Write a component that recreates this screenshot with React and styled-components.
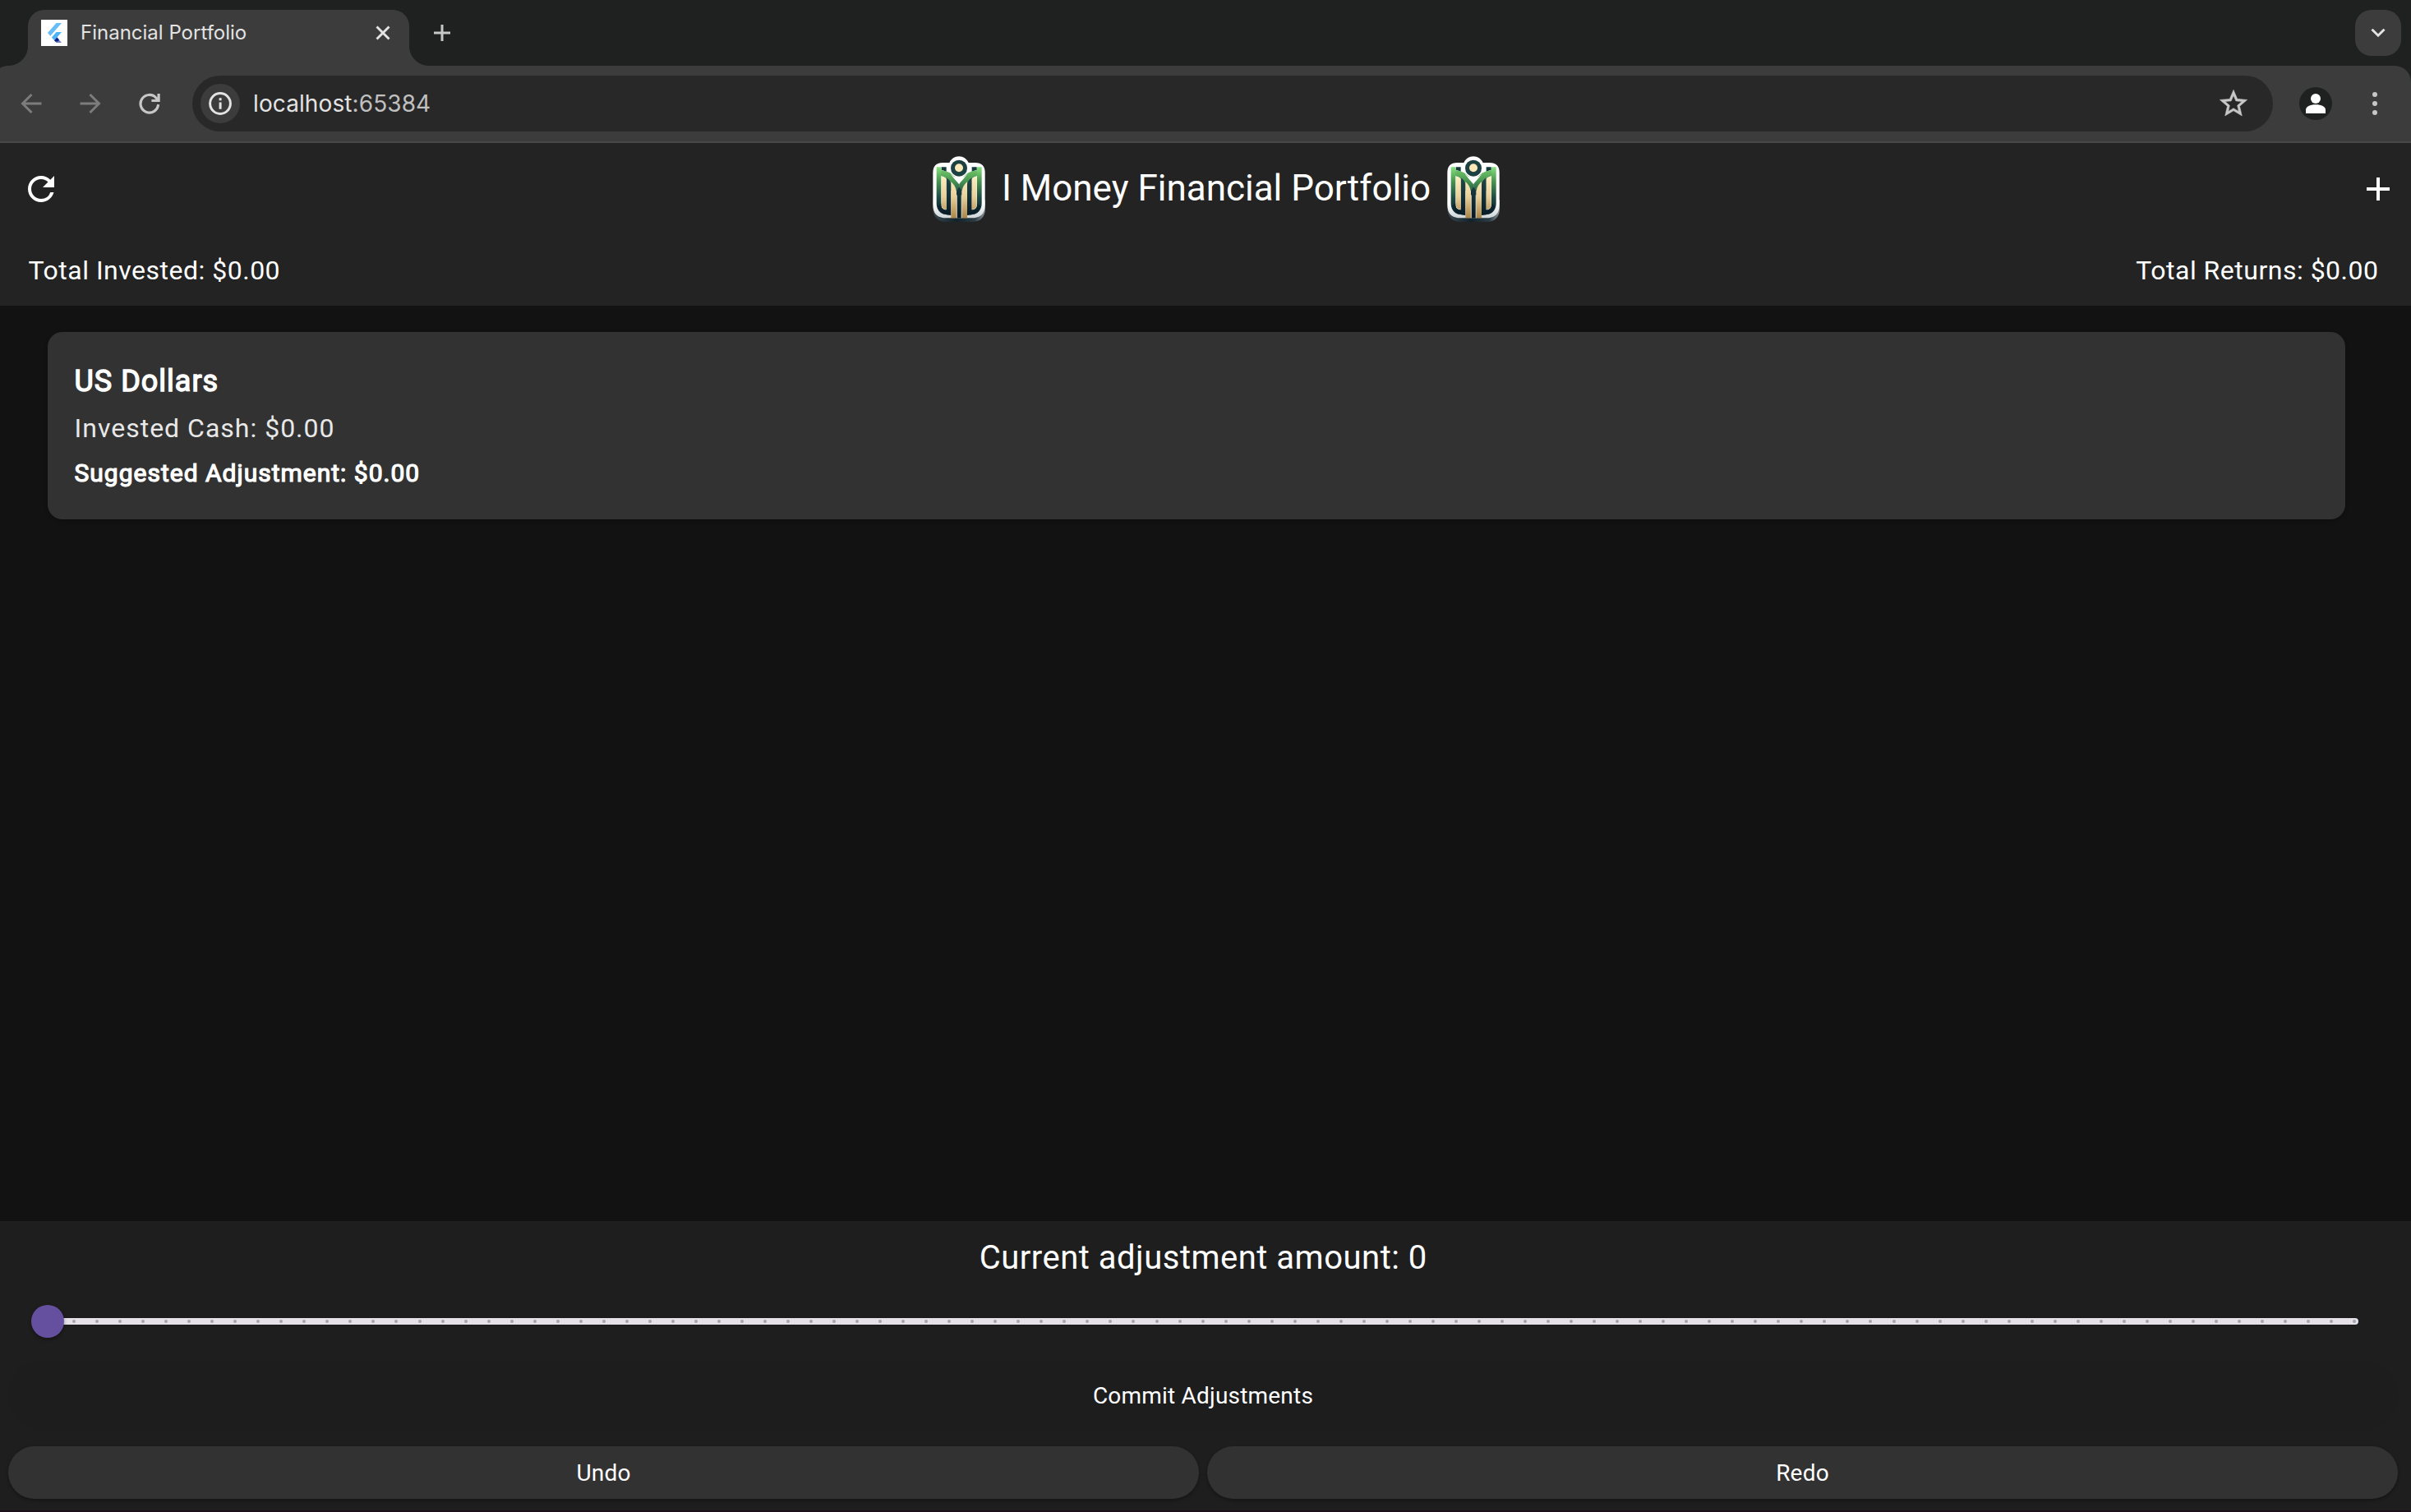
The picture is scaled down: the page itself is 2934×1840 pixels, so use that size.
import React from 'react';
import styled, { createGlobalStyle } from 'styled-components';

const GlobalStyle = createGlobalStyle`
  *, *::before, *::after { box-sizing: border-box; }
  body {
    margin: 0;
    background: #121212;
    color: #fff;
    font-family: Roboto, "Liberation Sans", sans-serif;
  }
  button { border: 0; padding: 0; background: none; color: inherit; font: inherit; }
  svg { display: block; flex: none; }
`;

const Window = styled.div`
  display: flex;
  flex-direction: column;
  width: 100vw;
  height: 100vh;
  overflow: hidden;
`;

/* ---------- browser chrome ---------- */

const BrowserFrame = styled.header`
  flex: none;
  background: #1f2120;
  font-family: Inter, "Liberation Sans", sans-serif;
`;

const TabStrip = styled.div`
  display: flex;
  align-items: center;
  height: 80px;
  padding: 12px 12px 0 34px;
`;

const Tab = styled.div`
  position: relative;
  display: flex;
  align-items: flex-start;
  width: 464px;
  height: 68px;
  padding: 12px 23px 0 16px;
  border-radius: 20px 20px 0 0;
  background: #3c3c3c;

  &::before,
  &::after {
    content: '';
    position: absolute;
    bottom: 0;
    width: 24px;
    height: 24px;
  }
  &::before {
    right: 100%;
    background: radial-gradient(circle at 0 0, transparent 23.5px, #3c3c3c 24.5px);
  }
  &::after {
    left: 100%;
    background: radial-gradient(circle at 100% 0, transparent 23.5px, #3c3c3c 24.5px);
  }
`;

const Favicon = styled.span`
  display: grid;
  place-items: center;
  width: 32px;
  height: 32px;
  background: #fff;
`;

const TabTitle = styled.span`
  flex: 1;
  margin-left: 16px;
  color: #e3e3e3;
  font-size: 24px;
  line-height: 31px;
`;

const TabClose = styled.button`
  display: grid;
  place-items: center;
  height: 32px;
`;

const NewTabButton = styled.button`
  display: grid;
  place-items: center;
  width: 56px;
  height: 56px;
  margin: 0 auto 12px 12px;
`;

const TabSearchButton = styled.button`
  display: grid;
  place-items: center;
  width: 56px;
  height: 56px;
  margin-bottom: 12px;
  border-radius: 20px;
  background: #3c3c3c;
`;

const Toolbar = styled.div`
  display: flex;
  align-items: center;
  height: 94px;
  margin-left: -10px;
  padding: 0 24px 0 20px;
  border-bottom: 2px solid #484848;
  border-radius: 20px 20px 0 0;
  background: #3c3c3c;
`;

const NavButtons = styled.nav`
  display: flex;
  gap: 16px;
`;

const ToolButton = styled.button`
  display: grid;
  place-items: center;
  width: ${(p) => p.$size || 56}px;
  height: 56px;
`;

const Omnibox = styled.div`
  flex: 1;
  display: flex;
  align-items: center;
  height: 68px;
  margin: 0 32px 0 24px;
  padding: 0 28px 0 10px;
  border-radius: 34px;
  background: #282828;
`;

const SiteInfo = styled.span`
  display: grid;
  place-items: center;
  width: 48px;
  height: 48px;
  border-radius: 50%;
  background: #3c3c3c;
`;

const Address = styled.span`
  flex: 1;
  margin-left: 16px;
  color: #e3e3e3;
  font-size: 28px;
  line-height: 68px;
  letter-spacing: 0.1px;
`;

const Port = styled.span`
  color: #c0c0c0;
`;

const Avatar = styled.span`
  display: grid;
  place-items: center;
  width: 40px;
  height: 40px;
  margin-right: 32px;
  border-radius: 50%;
  background: #1f2120;
`;

/* ---------- application ---------- */

const AppHeader = styled.section`
  flex: none;
  background: #232323;
`;

const AppBar = styled.div`
  display: flex;
  align-items: center;
  justify-content: space-between;
  height: 112px;
  padding: 0 16px 0 26px;
`;

const IconButton = styled.button`
  width: 48px;
  height: 48px;
`;

const Brand = styled.div`
  display: flex;
  align-items: center;
  gap: 12px;
  margin-left: 16px;
`;

const AppTitle = styled.h1`
  margin: 0;
  padding-bottom: 3px;
  font-size: 44px;
  font-weight: 400;
  line-height: 56px;
`;

const Totals = styled.div`
  display: flex;
  align-items: center;
  justify-content: space-between;
  height: 86px;
  padding: 0 39.5px 0 34.5px;
  font-size: 32px;
  letter-spacing: 0.5px;
`;

const Holdings = styled.main`
  flex: 1;
  padding: 32px 80px 0 58px;
  background: #121212;
`;

const Card = styled.article`
  height: 228px;
  padding: 33px 32px 0 32.5px;
  border-radius: 18px;
  background: #323232;
  box-shadow: 0 2px 4px rgba(0, 0, 0, 0.25);
  letter-spacing: 1px;
`;

const CardTitle = styled.h2`
  margin: 0;
  font-size: 36px;
  font-weight: 400;
  line-height: 54px;
  -webkit-text-stroke: 1.4px currentColor;
`;

const CardLine = styled.p`
  margin: 0;
  color: #e8e8e8;
  font-size: 32px;
  line-height: 60px;
`;

const CardAdvice = styled.p`
  margin: 0;
  font-size: 30px;
  line-height: 50px;
  -webkit-text-stroke: 1.2px currentColor;
`;

const ControlPanel = styled.footer`
  flex: none;
  display: flex;
  flex-direction: column;
  height: 354px;
  padding: 0 16px 0 10px;
  border-bottom: 2px solid #1a101a;
  background: #1e1e1e;
`;

const AdjustmentLabel = styled.div`
  height: 88px;
  padding-left: 0.5px;
  font-size: 40px;
  line-height: 90px;
  letter-spacing: 0.5px;
  text-align: center;
`;

const Slider = styled.div`
  display: flex;
  align-items: center;
  position: relative;
  height: 68px;
  margin: 0 48px;
`;

const SliderTrack = styled.div`
  flex: 1;
  display: flex;
  align-items: center;
  justify-content: space-between;
  height: 8px;
  padding: 0 2px;
  border-radius: 4px;
  background: #e6e0e9;
  box-shadow: 0 0 2px rgba(0, 0, 0, 0.3);
`;

const Tick = styled.i`
  width: 4px;
  height: 4px;
  border-radius: 50%;
  background: #a7a2ab;
`;

const SliderThumb = styled.span`
  position: absolute;
  left: -20px;
  width: 40px;
  height: 40px;
  border-radius: 50%;
  background: #6550a0;
  box-shadow: 0 2px 4px rgba(0, 0, 0, 0.35);
`;

const PanelButton = styled.button`
  flex: 1;
  display: block;
  height: ${(p) => p.$height || 64}px;
  border-radius: 42px;
  background: ${(p) => (p.$flat ? '#1d1d1d' : '#323232')};
  box-shadow: ${(p) => (p.$flat ? 'none' : '0 2px 4px rgba(0, 0, 0, 0.3)')};
  font-size: 28px;
  letter-spacing: 0.2px;
  text-align: center;
`;

const CommitRow = styled.div`
  display: flex;
  margin-top: 14px;
`;

const HistoryRow = styled.div`
  display: flex;
  gap: 10px;
  margin-top: 20px;
`;

/* ---------- drawings ---------- */

const FlutterMark = () => (
  <svg width="17" height="24" viewBox="2.3 0 19.4 24" preserveAspectRatio="none">
    <path d="M14.3 0 2.3 12 6 15.7 21.7 0z" fill="#66bdf8" />
    <path d="M14.3 11.1 7.9 17.5l3.7 3.7L21.7 11.1z" fill="#4fb4f5" />
    <path d="M11.6 21.2 14.3 24h7.4l-6.4-6.5z" fill="#6f86b8" />
    <path d="m11.6 21.2 3.7-3.7 3 3-2 2h-3.4z" fill="#0b1f8c" />
  </svg>
);

const CrossIcon = () => (
  <svg width="18" height="18" viewBox="0 0 18 18" stroke="#e3e3e3" strokeWidth="2.9">
    <path d="M1.5 1.5 16.5 16.5M16.5 1.5 1.5 16.5" />
  </svg>
);

const NewTabIcon = () => (
  <svg width="20" height="20" viewBox="0 0 20 20" stroke="#c7c7c7" strokeWidth="3">
    <path d="M10 0v20M0 10h20" />
  </svg>
);

const ChevronIcon = () => (
  <svg width="18" height="12" viewBox="0 0 18 12" fill="none" stroke="#e3e3e3" strokeWidth="3">
    <path d="m1.5 1.8 7.5 7.4 7.5-7.4" />
  </svg>
);

const ArrowIcon = ({ forward }) => (
  <svg width="26" height="26" viewBox="0 0 26 26" fill="none" stroke="#7c7c7c" strokeWidth="3">
    <path d={forward ? 'M.5 13h22M12.5 2l11 11-11 11' : 'M25.500 13h-22M13.500 2l-11 11 11 11'} />
  </svg>
);

const ReloadIcon = () => (
  <svg width="28" height="28" viewBox="0 0 28 28" fill="none" stroke="#c7c7c7" strokeWidth="3.2">
    <path d="M24.6 15.2A10.8 10.8 0 1 1 22 7.2l2.4 2.4" />
    <path d="M25.1 2v8.5M16.4 10.5h10.3" />
  </svg>
);

const InfoIcon = () => (
  <svg width="28" height="28" viewBox="0 0 28 28">
    <circle cx="14" cy="14" r="12.4" fill="none" stroke="#e3e3e3" strokeWidth="3" />
    <path d="M12.6 12.4h3v8.4h-3zM12.6 7.3h3v3h-3z" fill="#e3e3e3" />
  </svg>
);

const StarIcon = () => (
  <svg width="40" height="40" viewBox="0 0 24 24" fill="#c7c7c7" stroke="#c7c7c7" strokeWidth=".3">
    <path d="m22 9.24-7.19-.62L12 2 9.19 8.63 2 9.24l5.46 4.73L5.82 21 12 17.27 18.18 21l-1.63-7.03L22 9.24zM12 15.4l-3.76 2.27 1-4.28-3.32-2.88 4.38-.38L12 6.1l1.71 4.04 4.38.38-3.32 2.88 1 4.28L12 15.4z" />
  </svg>
);

const PersonIcon = () => (
  <svg width="24" height="24" viewBox="0 0 24 24" fill="#fff">
    <circle cx="12" cy="6" r="6" />
    <path d="M0 24v-4.2C0 15.6 5 13.2 12 13.2s12 2.4 12 6.6V24z" />
  </svg>
);

const DotsIcon = () => (
  <svg width="6" height="28" viewBox="0 0 6 28" fill="#c7c7c7">
    <circle cx="3" cy="3" r="3" />
    <circle cx="3" cy="14" r="3" />
    <circle cx="3" cy="25" r="3" />
  </svg>
);

const RefreshIcon = () => (
  <svg width="48" height="48" viewBox="0 0 24 24" fill="#fff">
    <path d="M17.65 6.35A7.958 7.958 0 0 0 12 4c-4.42 0-7.99 3.58-7.99 8s3.57 8 7.99 8c3.73 0 6.84-2.55 7.73-6h-2.08A5.99 5.99 0 0 1 12 18c-3.31 0-6-2.69-6-6s2.69-6 6-6c1.66 0 3.14.69 4.22 1.78L13 11h7V4l-2.35 2.35z" />
  </svg>
);

const AddIcon = () => (
  <svg width="48" height="48" viewBox="0 0 24 24" fill="#fff">
    <path d="M19 13h-6v6h-2v-6H5v-2h6V5h2v6h6v2z" />
  </svg>
);

const LogoHalf = ({ id }) => (
  <>
    <path d="M75 70h18v18c-6-4-12-6-18-7z" fill="#17393c" />
    <path d="M57 70h17v12c20 2 37 10 48 24 9 8 14 16 17 27v24H93V112c-6-5-12-8-19-10v100c0 20 5 34 18 42-22-3-35-18-35-42z" fill={`url(#${id}green)`} />
    <path d="M93 108c10 7 17 16 17 30v108c-24 0-44-12-49-34l13-10v8c0 9 9 16 19 16z" fill={`url(#${id}teal)`} />
    <path d="M75 104c7 2 13 5 18 9v112c-11-1-18-8-18-19z" fill={`url(#${id}gold)`} />
    <path d="M110 124c12 10 19 22 20 42v90h-20z" fill={`url(#${id}gold)`} />
    <path d="M74 82c30 4 55 18 65 50v36c-9-34-32-58-65-66z" fill={`url(#${id}leaf)`} />
  </>
);

const MoneyLogo = ({ id }) => (
  <svg width="80" height="80" viewBox="19 30 240 240">
    <defs>
      <linearGradient id={`${id}green`} x1="0" y1="70" x2="0" y2="245" gradientUnits="userSpaceOnUse">
        <stop offset="0" stopColor="#86e07e" />
        <stop offset=".3" stopColor="#489450" />
        <stop offset=".65" stopColor="#1c4844" />
        <stop offset="1" stopColor="#0b222c" />
      </linearGradient>
      <linearGradient id={`${id}leaf`} x1="0" y1="80" x2="0" y2="168" gradientUnits="userSpaceOnUse">
        <stop offset="0" stopColor="#70c468" />
        <stop offset=".45" stopColor="#4a9752" />
        <stop offset="1" stopColor="#1b4a45" />
      </linearGradient>
      <linearGradient id={`${id}teal`} x1="0" y1="100" x2="0" y2="250" gradientUnits="userSpaceOnUse">
        <stop offset="0" stopColor="#21494a" />
        <stop offset="1" stopColor="#071a26" />
      </linearGradient>
      <linearGradient id={`${id}gold`} x1="0" y1="100" x2="0" y2="256" gradientUnits="userSpaceOnUse">
        <stop offset="0" stopColor="#fff0c4" />
        <stop offset=".5" stopColor="#e8d09a" />
        <stop offset="1" stopColor="#a98549" />
      </linearGradient>
      <linearGradient id={`${id}plate`} x1="0" y1="30" x2="0" y2="258" gradientUnits="userSpaceOnUse">
        <stop offset=".75" stopColor="#ffffff" />
        <stop offset="1" stopColor="#ccd3d6" />
      </linearGradient>
      <linearGradient id={`${id}edge`} x1="44" y1="0" x2="235" y2="0" gradientUnits="userSpaceOnUse">
        <stop offset="0" stopColor="#3a4950" />
        <stop offset=".45" stopColor="#12222b" />
        <stop offset=".8" stopColor="#2c3c45" />
        <stop offset="1" stopColor="#8a9599" />
      </linearGradient>
    </defs>
    <path d="M44 190v30c0 32 18 50 50 50h92c32 0 49-18 49-50v-30z" fill={`url(#${id}edge)`} />
    <path
      d="M80 54h24c7-14 19-23 35-23s28 9 35 23h24c24 0 36 12 36 36v118c0 32-16 48-48 48H92c-32 0-48-16-48-48V90c0-24 12-36 36-36z"
      fill={`url(#${id}plate)`}
    />
    <LogoHalf id={id} />
    <g transform="matrix(-1 0 0 1 279 0)">
      <LogoHalf id={id} />
    </g>
    <path d="M130 156q5-4 9.500-14 5 10 9.500 14v100h-19z" fill={`url(#${id}teal)`} />
    <path d="M131 172v84M148.5 172v84" stroke="#fff4d2" strokeWidth="2.5" />
    <path d="M104 74a35 35 0 0 0 70 0c0 24-20 38-35 58-15-20-35-34-35-58z" fill="#fff" />
    <circle cx="139" cy="72" r="35" fill="#fff" />
    <circle cx="139" cy="74" r="30" fill="#1d4142" />
    <circle cx="139" cy="73" r="15" fill="#fbe9b8" />
  </svg>
);

const TICKS = Array.from({ length: 101 }, (_, i) => i);

export default function App() {
  return (
    <>
      <GlobalStyle />
      <Window>
        <BrowserFrame>
          <TabStrip>
            <Tab>
              <Favicon><FlutterMark /></Favicon>
              <TabTitle>Financial Portfolio</TabTitle>
              <TabClose><CrossIcon /></TabClose>
            </Tab>
            <NewTabButton><NewTabIcon /></NewTabButton>
            <TabSearchButton><ChevronIcon /></TabSearchButton>
          </TabStrip>
          <Toolbar>
            <NavButtons>
              <ToolButton><ArrowIcon /></ToolButton>
              <ToolButton><ArrowIcon forward /></ToolButton>
              <ToolButton><ReloadIcon /></ToolButton>
            </NavButtons>
            <Omnibox>
              <SiteInfo><InfoIcon /></SiteInfo>
              <Address>localhost<Port>:65384</Port></Address>
              <ToolButton $size={40}><StarIcon /></ToolButton>
            </Omnibox>
            <Avatar><PersonIcon /></Avatar>
            <ToolButton $size={40}><DotsIcon /></ToolButton>
          </Toolbar>
        </BrowserFrame>

        <AppHeader>
          <AppBar>
            <IconButton><RefreshIcon /></IconButton>
            <Brand>
              <MoneyLogo id="left" />
              <AppTitle>I Money Financial Portfolio</AppTitle>
              <MoneyLogo id="right" />
            </Brand>
            <IconButton><AddIcon /></IconButton>
          </AppBar>
          <Totals>
            <span>Total Invested: $0.00</span>
            <span>Total Returns: $0.00</span>
          </Totals>
        </AppHeader>

        <Holdings>
          <Card>
            <CardTitle>US Dollars</CardTitle>
            <CardLine>Invested Cash: $0.00</CardLine>
            <CardAdvice>Suggested Adjustment: $0.00</CardAdvice>
          </Card>
        </Holdings>

        <ControlPanel>
          <AdjustmentLabel>Current adjustment amount: 0</AdjustmentLabel>
          <Slider>
            <SliderTrack>
              {TICKS.map((tick) => <Tick key={tick} />)}
            </SliderTrack>
            <SliderThumb />
          </Slider>
          <CommitRow>
            <PanelButton $flat $height={84}>Commit Adjustments</PanelButton>
          </CommitRow>
          <HistoryRow>
            <PanelButton>Undo</PanelButton>
            <PanelButton>Redo</PanelButton>
          </HistoryRow>
        </ControlPanel>
      </Window>
    </>
  );
}
